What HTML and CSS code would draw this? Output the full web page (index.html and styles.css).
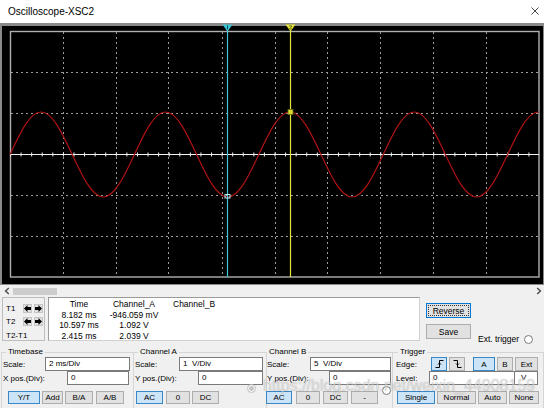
FILE: index.html
```html
<!DOCTYPE html>
<html>
<head>
<meta charset="utf-8">
<title>Oscilloscope-XSC2</title>
<link rel="stylesheet" href="styles.css">
</head>
<body>
<div class="titlebar">
  <span class="title">Oscilloscope-XSC2</span>
  <svg class="close" width="8" height="8" viewBox="0 0 8 8"><path d="M0.5 0.5 L7.5 7.5 M7.5 0.5 L0.5 7.5" stroke="#333" stroke-width="0.9" fill="none"/></svg>
</div>

<div class="scope">
  <svg class="plot" width="544" height="262" viewBox="0 23 544 262">
    <rect x="0" y="23" width="544" height="262" fill="#8a8a8a"/>
    <rect x="2" y="26" width="541" height="258" fill="#000"/>
    <g stroke="#9c9c9c" stroke-width="1" stroke-dasharray="2 3" fill="none">
      <path d="M63.5 32 V277 M116.5 32 V277 M168.5 32 V277 M222.5 32 V277 M275.5 32 V277 M327.5 32 V277 M380.5 32 V277 M433.5 32 V277 M486.5 32 V277"/>
      <path d="M11 72.5 H539 M11 113.5 H539 M11 195.5 H539 M11 236.5 H539"/>
    </g>
    <rect x="10.5" y="31.5" width="528.5" height="245.5" fill="none" stroke="#b0b0b0" stroke-width="1.4"/>
    <path d="M10 154.5 H539" stroke="#f2f2f2" stroke-width="1"/>
    <path d="M10 154.5 H539" stroke="#f2f2f2" stroke-width="4" stroke-dasharray="1 9.58"/>
    <path fill="none" stroke="#b01212" stroke-width="1.2" d="M10 154.5 c10.14 -21.77 19.85 -42.5 31.1 -42.5
      s20.96 20.73 31.1 42.5 s19.85 42.5 31.1 42.5 s20.96 -20.73 31.1 -42.5 s19.85 -42.5 31.1 -42.5
      s20.96 20.73 31.1 42.5 s19.85 42.5 31.1 42.5 s20.96 -20.73 31.1 -42.5 s19.85 -42.5 31.1 -42.5
      s20.96 20.73 31.1 42.5 s19.85 42.5 31.1 42.5 s20.96 -20.73 31.1 -42.5 s19.85 -42.5 31.1 -42.5
      s20.96 20.73 31.1 42.5 s19.85 42.5 31.1 42.5 s20.96 -20.73 31.1 -42.5 s19.85 -42.5 31.1 -42.5"/>
    <path d="M227.5 27 V277" stroke="#3fc6d4" stroke-width="1.2"/>
    <path d="M290.5 27 V277" stroke="#e5e53a" stroke-width="1.2"/>
    <polygon points="222.5,24.5 232.5,24.5 227.5,31.5" fill="#3fc6d4"/>
    <path d="M227.5 25.5 V29" stroke="#0a4a50" stroke-width="1"/>
    <polygon points="285.5,24.5 295.5,24.5 290.5,31.5" fill="#e5e53a"/>
    <path d="M289 26 H292 L289.5 29 H292" stroke="#5a5a10" stroke-width="0.8" fill="none"/>
    <rect x="225" y="194.5" width="5" height="3.5" fill="none" stroke="#bfeff4" stroke-width="1"/>
    <rect x="288" y="109.5" width="5" height="5" fill="#d8d830" stroke="#6a6a10" stroke-width="0.8"/>
  </svg>
</div>

<div class="scrollbar">
  <svg width="6" height="8" viewBox="0 0 6 8"><path d="M4.8 1 L1.6 4 L4.8 7" stroke="#505050" stroke-width="1.5" fill="none"/></svg>
  <div class="thumb"></div>
  <svg class="sb-right" width="6" height="8" viewBox="0 0 6 8"><path d="M1.2 1 L4.4 4 L1.2 7" stroke="#505050" stroke-width="1.5" fill="none"/></svg>
</div>

<div class="readout">
  <div class="tbox">
    <div class="trow">
      <span class="tl">T1</span>
      <span class="arr"><svg width="7" height="7" viewBox="0 0 7 7"><path d="M0 3.5 L3.5 0 V2 H7 V5 H3.5 V7 Z" fill="#000"/></svg></span>
      <span class="arr"><svg width="7" height="7" viewBox="0 0 7 7"><path d="M7 3.5 L3.5 0 V2 H0 V5 H3.5 V7 Z" fill="#000"/></svg></span>
    </div>
    <div class="trow r2">
      <span class="tl">T2</span>
      <span class="arr"><svg width="7" height="7" viewBox="0 0 7 7"><path d="M0 3.5 L3.5 0 V2 H7 V5 H3.5 V7 Z" fill="#000"/></svg></span>
      <span class="arr"><svg width="7" height="7" viewBox="0 0 7 7"><path d="M7 3.5 L3.5 0 V2 H0 V5 H3.5 V7 Z" fill="#000"/></svg></span>
    </div>
    <div class="trow r3"><span class="tl wide">T2-T1</span></div>
  </div>
  <div class="data">
    <div class="col c-time"><div>Time</div><div>8.182 ms</div><div>10.597 ms</div><div>2.415 ms</div></div>
    <div class="col c-a"><div>Channel_A</div><div>-946.059 mV</div><div>1.092 V</div><div>2.039 V</div></div>
    <div class="col c-b"><div>Channel_B</div></div>
  </div>
  <div class="side">
    <div class="sbtns">
      <div class="btn focus"><span class="dots">Reverse</span></div>
      <div class="btn save">Save</div>
    </div>
    <div class="ext"><span>Ext. trigger</span><span class="radio"></span></div>
  </div>
</div>

<div class="controls">
  <div class="group g1">
    <span class="lg">Timebase</span>
    <div class="row"><span class="lbl w42">Scale:</span><span class="inp w85">2 ms/Div</span></div>
    <div class="row"><span class="lbl w64">X pos.(Div):</span><span class="inp w62">0</span></div>
    <div class="row row3">
      <span class="b on w32 ml5">Y/T</span><span class="b w21 ml2">Add</span><span class="b w28 ml2">B/A</span><span class="b w28 ml3">A/B</span>
    </div>
  </div>
  <div class="group g2">
    <span class="lg">Channel A</span>
    <div class="row"><span class="lbl w44">Scale:</span><span class="inp w84">1  V/Div</span></div>
    <div class="row"><span class="lbl w63">Y pos.(Div):</span><span class="inp w65">0</span></div>
    <div class="row row3">
      <span class="b on w27 ml1">AC</span><span class="b w24 ml3">0</span><span class="b w27 ml2">DC</span><span class="radio dis r-a"></span>
    </div>
  </div>
  <div class="group g3">
    <span class="lg">Channel B</span>
    <div class="row"><span class="lbl w43">Scale:</span><span class="inp w81">5  V/Div</span></div>
    <div class="row"><span class="lbl w62">Y pos.(Div):</span><span class="inp w62">0</span></div>
    <div class="row row3">
      <span class="b on w26 mlm1">AC</span><span class="b w24 ml4">0</span><span class="b w25 ml3">DC</span><span class="b w27 ml3">-</span><span class="radio r-b"></span>
    </div>
  </div>
  <div class="group g4">
    <span class="lg">Trigger</span>
    <div class="row">
      <span class="lbl w35">Edge:</span>
      <span class="b on w16"><svg width="9" height="10" viewBox="0 0 9 10"><path d="M0.5 8.5 H4.5 V1.5 H8.5 M3 5.5 L4.5 4 L6 5.5" stroke="#000" stroke-width="1" fill="none"/></svg></span>
      <span class="b w16 ml2"><svg width="9" height="10" viewBox="0 0 9 10"><path d="M0.5 1.5 H4.5 V8.5 H8.5 M3 4.5 L4.5 6 L6 4.5" stroke="#000" stroke-width="1" fill="none"/></svg></span>
      <span class="b on w22 ml8">A</span><span class="b w16 ml2">B</span><span class="b w23 ml2">Ext</span>
    </div>
    <div class="row">
      <span class="lbl w33">Level:</span><span class="inp w86">0</span><span class="inp unit w24">V</span>
    </div>
    <div class="row row3">
      <span class="b on w38 ml1">Single</span><span class="b w39 ml2">Normal</span><span class="b w29 ml2">Auto</span><span class="b w30 ml2">None</span>
    </div>
  </div>
</div>

<div class="wm">https://blog.csdn.net/weixin_44908159</div>
</body>
</html>
```

FILE: styles.css
```css
html, body {
  margin: 0;
  padding: 0;
}
body {
  width: 544px;
  height: 408px;
  overflow: hidden;
  position: relative;
  background: #f0f0f0;
  color: #000;
  font-family: "Liberation Sans", Arial, sans-serif;
}

.titlebar {
  height: 23px;
  box-sizing: border-box;
  background: #fff;
  display: flex;
  align-items: center;
  justify-content: space-between;
  padding: 0 5px 0 8px;
  font-size: 10px;
}
.close {
  display: block;
  margin-top: -1px;
}

.scope {
  height: 262px;
}
.plot {
  display: block;
}

.scrollbar {
  height: 12px;
  display: flex;
  align-items: center;
  padding: 0 2px 0 4px;
  box-sizing: border-box;
}
.scrollbar svg {
  display: block;
}
.thumb {
  width: 44px;
  height: 7px;
  margin-left: 3px;
  background: #cdcdcd;
}
.sb-right {
  margin-left: auto;
}

.readout {
  height: 46px;
  display: flex;
  align-items: flex-start;
  padding-left: 2px;
}
.tbox {
  box-sizing: border-box;
  width: 43px;
  height: 44px;
  border: 1px solid #bdbdbd;
  padding: 6px 0 0 3px;
  font-size: 8px;
}
.trow {
  display: flex;
  align-items: center;
  height: 9px;
}
.trow.r2 {
  margin-top: 4px;
}
.trow.r3 {
  margin-top: 5px;
}
.tl {
  width: 17px;
  flex: none;
  white-space: nowrap;
}
.tl.wide {
  width: auto;
}
.arr {
  box-sizing: border-box;
  width: 9px;
  height: 9px;
  margin-right: 2px;
  background: #e1e1e1;
  border: 1px solid #c4c4c4;
  display: flex;
  align-items: center;
  justify-content: center;
}
.arr svg {
  display: block;
}

.data {
  box-sizing: border-box;
  width: 372px;
  height: 44px;
  margin-left: 3px;
  background: #fff;
  border: 1px solid;
  border-color: #9a9a9a #d0d0d0 #d0d0d0 #9a9a9a;
  display: flex;
  padding-top: 1px;
  font-size: 8.5px;
  line-height: 10.5px;
}
.col {
  text-align: center;
  white-space: nowrap;
}
.c-time {
  width: 48px;
  margin-left: 6px;
}
.c-a {
  width: 52px;
  margin-left: 5px;
}
.c-b {
  width: 40px;
  margin-left: 13px;
}

.side {
  display: flex;
  margin-left: 6px;
}
.sbtns {
  width: 45px;
  padding-top: 6px;
}
.btn {
  box-sizing: border-box;
  width: 45px;
  height: 15px;
  background: #e1e1e1;
  border: 1px solid #adadad;
  font-size: 8.5px;
  display: flex;
  align-items: center;
  justify-content: center;
}
.btn.focus {
  border-color: #0078d7;
  padding: 1px;
}
.btn.focus .dots {
  width: 100%;
  height: 100%;
  box-sizing: border-box;
  border: 1px dotted #333;
  display: flex;
  align-items: center;
  justify-content: center;
}
.btn.save {
  margin-top: 6px;
}
.ext {
  margin: 37px 0 0 7px;
  display: flex;
  align-items: center;
  height: 10px;
  font-size: 8.5px;
  white-space: nowrap;
}
.ext .radio {
  margin-left: 5px;
}

.radio {
  box-sizing: border-box;
  width: 9px;
  height: 9px;
  border-radius: 50%;
  border: 1px solid #7a7a7a;
  background: #fff;
  flex: none;
  display: block;
}
.radio.dis {
  border-color: #c4c4c4;
  background: radial-gradient(circle, #c4c4c4 0 2px, #f4f4f4 2.5px);
}
.r-a {
  margin-left: 28px;
  align-self: flex-start;
  margin-top: -7px;
}
.r-b {
  margin-left: 4px;
  align-self: flex-start;
  margin-top: -5px;
}

.controls {
  display: flex;
  margin-top: 9px;
}
.group {
  box-sizing: border-box;
  height: 70px;
  position: relative;
  border-top: 1px solid #d5d5d5;
  border-right: 1px solid #d5d5d5;
  padding-top: 4px;
  font-size: 8px;
}
.g1 {
  margin-left: 1px;
  width: 133px;
  border-left: 1px solid #d5d5d5;
  padding-left: 1px;
}
.g2 {
  width: 133px;
  padding-left: 1px;
}
.g3 {
  width: 126px;
}
.g4 {
  width: 151px;
  padding-left: 3px;
}
.lg {
  position: absolute;
  top: -6px;
  left: 4px;
  padding: 0 2px;
  background: #f0f0f0;
  line-height: 10px;
  white-space: nowrap;
}
.g3 .lg {
  left: 0;
}
.g4 .lg {
  left: 5px;
}

.row {
  display: flex;
  align-items: center;
  height: 14px;
}
.row3 {
  margin-top: 6px;
  height: 13px;
}
.lbl {
  flex: none;
  white-space: nowrap;
}
.inp {
  box-sizing: border-box;
  flex: none;
  height: 14px;
  border: 1px solid #7a7a7a;
  background: #fff;
  padding-left: 3px;
  line-height: 12px;
  white-space: pre;
}
.unit {
  margin-left: -1px;
  padding-left: 6px;
}
.b {
  box-sizing: border-box;
  flex: none;
  height: 100%;
  background: #e1e1e1;
  border: 1px solid #adadad;
  display: flex;
  align-items: center;
  justify-content: center;
  white-space: nowrap;
}
.b svg {
  display: block;
}
.b.on {
  background: #cce4f7;
  border-color: #3b86c4;
}

.w16 { width: 16px; }
.w21 { width: 21px; }
.w22 { width: 22px; }
.w23 { width: 23px; }
.w24 { width: 24px; }
.w25 { width: 25px; }
.w26 { width: 26px; }
.w27 { width: 27px; }
.w28 { width: 28px; }
.w29 { width: 29px; }
.w30 { width: 30px; }
.w32 { width: 32px; }
.w33 { width: 33px; }
.w35 { width: 35px; }
.w38 { width: 38px; }
.w39 { width: 39px; }
.w42 { width: 42px; }
.w43 { width: 43px; }
.w44 { width: 44px; }
.w62 { width: 62px; }
.w63 { width: 63px; }
.w64 { width: 64px; }
.w65 { width: 65px; }
.w81 { width: 81px; }
.w84 { width: 84px; }
.w85 { width: 85px; }
.w86 { width: 86px; }
.ml1 { margin-left: 1px; }
.ml2 { margin-left: 2px; }
.ml3 { margin-left: 3px; }
.ml4 { margin-left: 4px; }
.ml5 { margin-left: 5px; }
.ml8 { margin-left: 8px; }
.mlm1 { margin-left: -1px; }

.wm {
  position: absolute;
  left: 263px;
  top: 377px;
  font-size: 16px;
  line-height: 18px;
  white-space: nowrap;
  color: rgba(255, 255, 255, 0.55);
  text-shadow: 0 0 1px rgba(70, 70, 70, 0.45);
  pointer-events: none;
}
```
